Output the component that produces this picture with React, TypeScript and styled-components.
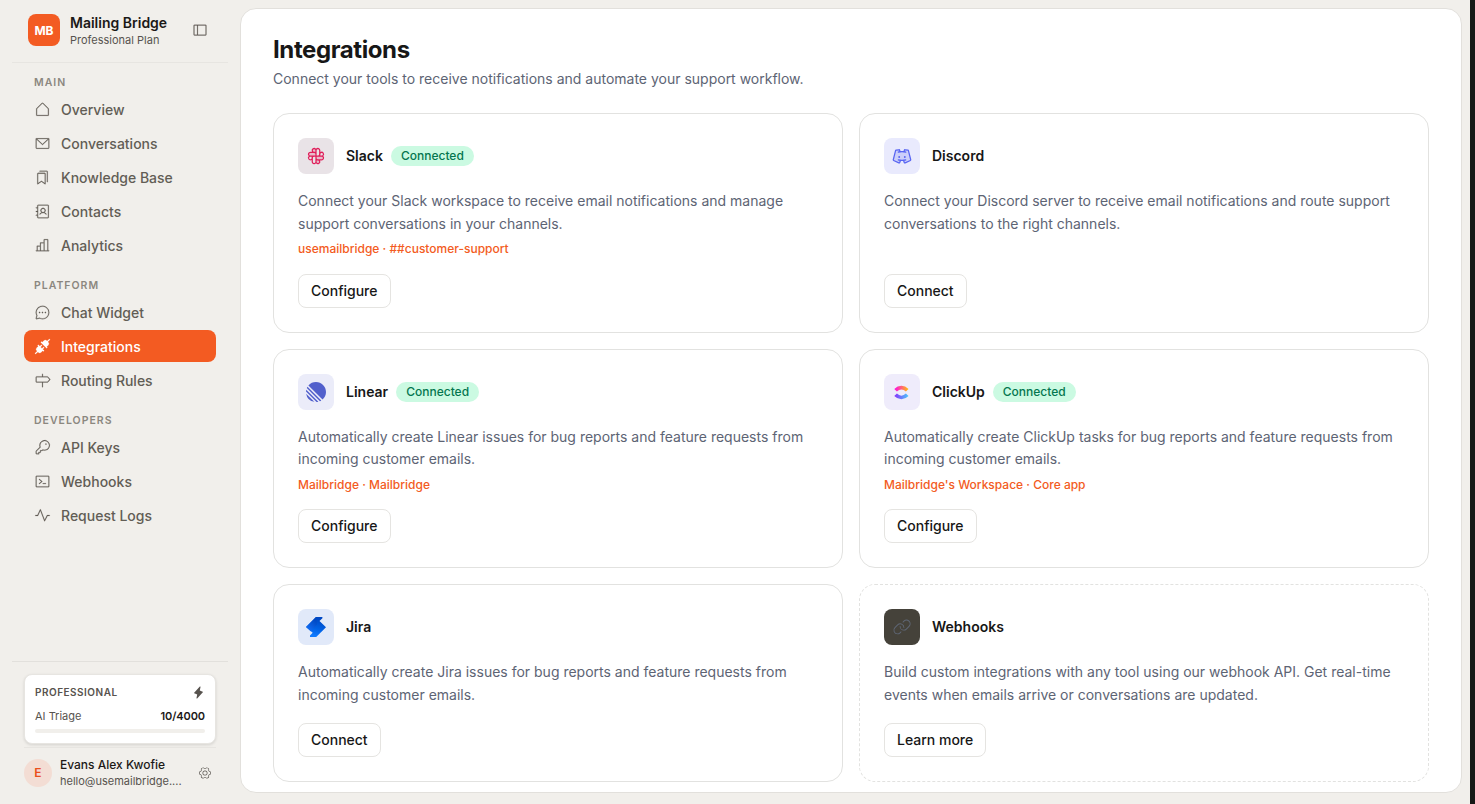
import React from "react";
import styled, { createGlobalStyle } from "styled-components";
import {
  PiHouseSimpleLight,
  PiEnvelopeSimpleLight,
  PiBookmarksSimpleLight,
  PiAddressBookLight,
  PiChartBarLight,
  PiChatCircleDotsLight,
  PiPlugsFill,
  PiSignpostLight,
  PiKeyLight,
  PiTerminalWindowLight,
  PiPulseLight,
  PiSidebarSimpleLight,
  PiLightningFill,
  PiGearSixLight,
  PiLinkLight,
  PiSlackLogoDuotone,
  PiDiscordLogoDuotone,
} from "react-icons/pi";
import { SiLinear } from "react-icons/si";

const GlobalStyle = createGlobalStyle`
  *, *::before, *::after { box-sizing: border-box; }
  body {
    margin: 0;
    background: #f1efeb;
    font-family: Inter, "Liberation Sans", sans-serif;
    color: #171717;
    overflow: hidden;
  }
  h1, h2, p { margin: 0; }
  svg { display: block; flex: none; }
`;

const Shell = styled.div`
  display: flex;
  width: 1475px;
  height: 804px;
  background: #f1efeb;
  border-right: 5px solid #161917;
`;

const Sidebar = styled.aside`
  width: 240px;
  height: 801px;
  padding: 0 12px;
  display: flex;
  flex-direction: column;
  flex: none;
`;

const Brand = styled.header`
  height: 62.5px;
  padding: 0 16px 1px;
  display: flex;
  align-items: center;
  gap: 10px;
  border-bottom: 1.5px solid #e7e5e1;
  color: #57534e;
`;

const Logo = styled.div`
  width: 32px;
  height: 32px;
  border-radius: 8px;
  background: #f35b22;
  color: #fff;
  display: grid;
  place-items: center;
  font-size: 12px;
  font-weight: 700;
`;

const BrandText = styled.div`
  flex: 1;
  padding-top: 2px;
  display: flex;
  flex-direction: column;
`;

const BrandName = styled.span`
  font-size: 14px;
  line-height: 18px;
  font-weight: 600;
  color: #1c1917;
`;

const BrandPlan = styled.span`
  font-size: 11px;
  line-height: 16px;
`;

const Toggle = styled.button`
  border: 0;
  padding: 0;
  margin-right: 4px;
  background: none;
  color: #57534e;
  svg {
    stroke: currentColor;
    stroke-width: 3px;
  }
`;

const Nav = styled.nav`
  flex: 1;
  padding: 10.5px 12px 0;
`;

const Group = styled.section`
  display: flex;
  flex-direction: column;
  gap: 2px;
  margin-bottom: 15px;
`;

const GroupLabel = styled.span`
  height: 18px;
  padding-left: 10px;
  line-height: 19px;
  font-size: 10.5px;
  font-weight: 600;
  letter-spacing: 1px;
  color: #8b877f;
`;

const NavItem = styled.a<{ $active?: boolean }>`
  height: 32px;
  padding: 0 10px;
  display: flex;
  align-items: center;
  gap: 10px;
  border-radius: 8px;
  font-size: 14px;
  font-weight: 500;
  color: ${(p) => (p.$active ? "#fff" : "#625d55")};
  background: ${(p) => (p.$active ? "#f35b22" : "transparent")};
  svg {
    stroke: currentColor;
    stroke-width: 3px;
  }
`;

const Footer = styled.footer`
  border-top: 1px solid #e2e0dc;
  padding: 12px 12px 0;
  height: 140px;
`;

const Usage = styled.div`
  height: 70px;
  padding: 10px 10px 0;
  border: 1px solid #e7e5e1;
  border-radius: 8px;
  background: #fff;
  box-shadow: 0 1px 3px rgba(0, 0, 0, 0.12);
`;

const UsageRow = styled.div`
  display: flex;
  align-items: center;
  justify-content: space-between;
  color: #57534e;
`;

const UsagePlan = styled.span`
  font-size: 10px;
  line-height: 15px;
  font-weight: 600;
  letter-spacing: 0.5px;
`;

const UsageLabel = styled.span`
  margin-top: 8px;
  font-size: 11px;
  line-height: 17px;
`;

const UsageCount = styled(UsageLabel)`
  font-weight: 600;
  letter-spacing: -0.1px;
  color: #1c1917;
`;

const Meter = styled.div`
  height: 4px;
  margin-top: 4px;
  border-radius: 2px;
  background: #f1efeb;
`;

const Account = styled.div`
  margin-top: 3px;
  border-top: 1.5px solid #e7e5e1;
  padding: 9px 4px 0 0;
  display: flex;
  align-items: center;
  gap: 8px;
  color: #57534e;
`;

const Avatar = styled.div`
  width: 28px;
  height: 28px;
  margin-top: -1px;
  border-radius: 50%;
  background: #f3ddd4;
  color: #ea4f1d;
  display: grid;
  place-items: center;
  font-size: 12px;
  font-weight: 600;
`;

const AccountText = styled.div`
  flex: 1;
  display: flex;
  flex-direction: column;
  font-size: 11px;
  line-height: 16px;
  strong {
    font-size: 12px;
    font-weight: 500;
    color: #1c1917;
  }
`;

const Main = styled.main`
  width: 1222px;
  height: 785px;
  margin-top: 8px;
  padding: 29px 32px 0;
  border: 1px solid #e2e0dc;
  border-radius: 16px;
  background: #fff;
`;

const Title = styled.h1`
  font-size: 24px;
  line-height: 24px;
  font-weight: 700;
  letter-spacing: -0.4px;
  color: #171717;
`;

const Subtitle = styled.p`
  margin-top: 6px;
  font-size: 14px;
  line-height: 21px;
  color: #5d6474;
`;

const Grid = styled.div`
  display: grid;
  grid-template-columns: 570px 570px;
  gap: 16px;
  margin-top: 24px;
`;

const Card = styled.article<{ $dashed?: boolean }>`
  padding: 24px;
  border: 1px ${(p) => (p.$dashed ? "dashed" : "solid")} #e2e2e0;
  border-radius: 16px;
  display: flex;
  flex-direction: column;
  align-items: flex-start;
`;

const CardHead = styled.div`
  display: flex;
  align-items: center;
`;

const IconTile = styled.div<{ $bg: string; $fg: string }>`
  width: 36px;
  height: 36px;
  margin-right: 12px;
  border-radius: 8px;
  display: grid;
  place-items: center;
  background: ${(p) => p.$bg};
  color: ${(p) => p.$fg};
`;

const CardTitle = styled.h2`
  font-size: 14px;
  line-height: 20px;
  font-weight: 600;
`;

const Badge = styled.span`
  height: 20px;
  margin-left: 8px;
  padding: 0 10px;
  border-radius: 10px;
  background: #cbfae2;
  color: #04764f;
  font-size: 12px;
  line-height: 20px;
  font-weight: 500;
`;

const Description = styled.p`
  margin-top: 16px;
  font-size: 14px;
  line-height: 22.75px;
  color: #5d6474;
  white-space: pre-line;
`;

const Meta = styled.p`
  margin-top: 4.5px;
  height: 17px;
  font-size: 12px;
  line-height: 18px;
  font-weight: 500;
  color: #f35b22;
`;

const Action = styled.button`
  height: 34px;
  margin-top: auto;
  padding: 0 12px 1px;
  border: 1px solid #e5e4e1;
  border-radius: 8px;
  background: #fff;
  font: 500 14px Inter, "Liberation Sans", sans-serif;
  color: #171717;
`;

const Spacer = styled.div<{ $tall?: boolean }>`
  height: ${(p) => (p.$tall ? "16.5px" : "16px")};
`;

const ClickUpLogo = () => (
  <svg width="20" height="20" viewBox="0 0 20 20" fill="none" strokeWidth="3.7">
    <defs>
      <linearGradient id="cuTop" x1="2" x2="17" y1="0" y2="0" gradientUnits="userSpaceOnUse">
        <stop stopColor="#ff02f0" />
        <stop offset="1" stopColor="#ffc800" />
      </linearGradient>
      <linearGradient id="cuBottom" x1="2" x2="17" y1="0" y2="0" gradientUnits="userSpaceOnUse">
        <stop stopColor="#8930fd" />
        <stop offset="1" stopColor="#49ccf9" />
      </linearGradient>
    </defs>
    <path d="M3.6 8.2Q6.2 5.6 9.4 5.6Q12.6 5.6 15.2 8.2" stroke="url(#cuTop)" />
    <path d="M3.6 12.8Q6.2 15.5 9.4 15.5Q12.6 15.5 15.2 12.8" stroke="url(#cuBottom)" />
  </svg>
);

const JiraLogo = () => (
  <svg width="20" height="20" viewBox="0 0 20 20">
    <defs>
      <linearGradient id="jiraBody" x1="12" y1="2" x2="8" y2="19" gradientUnits="userSpaceOnUse">
        <stop stopColor="#0049c4" />
        <stop offset="0.55" stopColor="#0061e4" />
        <stop offset="1" stopColor="#107bff" />
      </linearGradient>
      <linearGradient id="jiraLeft" x1="10" y1="4" x2="3" y2="12" gradientUnits="userSpaceOnUse">
        <stop stopColor="#0049c4" />
        <stop offset="1" stopColor="#0f69ef" />
      </linearGradient>
    </defs>
    <path d="M10 0H16.4V1.2L13.5 4L20 10.2L10.2 20H4V18.6L6.7 15.8L0 9.9Z" fill="url(#jiraBody)" />
    <path d="M10 0L0 9.9L5 14.6L11 7.5Z" fill="url(#jiraLeft)" />
  </svg>
);

const groups = [
  {
    label: "MAIN",
    items: [
      { icon: PiHouseSimpleLight, text: "Overview" },
      { icon: PiEnvelopeSimpleLight, text: "Conversations" },
      { icon: PiBookmarksSimpleLight, text: "Knowledge Base" },
      { icon: PiAddressBookLight, text: "Contacts" },
      { icon: PiChartBarLight, text: "Analytics" },
    ],
  },
  {
    label: "PLATFORM",
    items: [
      { icon: PiChatCircleDotsLight, text: "Chat Widget" },
      { icon: PiPlugsFill, text: "Integrations", active: true },
      { icon: PiSignpostLight, text: "Routing Rules" },
    ],
  },
  {
    label: "DEVELOPERS",
    items: [
      { icon: PiKeyLight, text: "API Keys" },
      { icon: PiTerminalWindowLight, text: "Webhooks" },
      { icon: PiPulseLight, text: "Request Logs" },
    ],
  },
];

interface Integration {
  name: string;
  icon: React.ReactNode;
  bg: string;
  fg: string;
  text: string;
  connected?: boolean;
  meta?: string;
  action: string;
  dashed?: boolean;
}

const integrations: Integration[] = [
  {
    name: "Slack",
    icon: <PiSlackLogoDuotone size={20} />,
    bg: "#e9e3e7",
    fg: "#e01e5a",
    connected: true,
    text: "Connect your Slack workspace to receive email notifications and manage\nsupport conversations in your channels.",
    meta: "usemailbridge · ##customer-support",
    action: "Configure",
  },
  {
    name: "Discord",
    icon: <PiDiscordLogoDuotone size={20} />,
    bg: "#e9eafd",
    fg: "#5865f2",
    text: "Connect your Discord server to receive email notifications and route support\nconversations to the right channels.",
    action: "Connect",
  },
  {
    name: "Linear",
    icon: <SiLinear size={20} />,
    bg: "#ebecf9",
    fg: "#5260cc",
    connected: true,
    text: "Automatically create Linear issues for bug reports and feature requests from\nincoming customer emails.",
    meta: "Mailbridge · Mailbridge",
    action: "Configure",
  },
  {
    name: "ClickUp",
    icon: <ClickUpLogo />,
    bg: "#efecfb",
    fg: "#7b68ee",
    connected: true,
    text: "Automatically create ClickUp tasks for bug reports and feature requests from\nincoming customer emails.",
    meta: "Mailbridge's Workspace · Core app",
    action: "Configure",
  },
  {
    name: "Jira",
    icon: <JiraLogo />,
    bg: "#e1e9f9",
    fg: "#0052cc",
    text: "Automatically create Jira issues for bug reports and feature requests from\nincoming customer emails.",
    action: "Connect",
  },
  {
    name: "Webhooks",
    icon: <PiLinkLight size={20} />,
    bg: "#45423a",
    fg: "#5f6776",
    text: "Build custom integrations with any tool using our webhook API. Get real-time\nevents when emails arrive or conversations are updated.",
    action: "Learn more",
    dashed: true,
  },
];

export default function App() {
  return (
    <Shell>
      <GlobalStyle />
      <Sidebar>
        <Brand>
          <Logo>MB</Logo>
          <BrandText>
            <BrandName>Mailing Bridge</BrandName>
            <BrandPlan>Professional Plan</BrandPlan>
          </BrandText>
          <Toggle>
            <PiSidebarSimpleLight size={16} />
          </Toggle>
        </Brand>
        <Nav>
          {groups.map((g) => (
            <Group key={g.label}>
              <GroupLabel>{g.label}</GroupLabel>
              {g.items.map(({ icon: Icon, text, active }: any) => (
                <NavItem key={text} $active={active}>
                  <Icon size={17} />
                  {text}
                </NavItem>
              ))}
            </Group>
          ))}
        </Nav>
        <Footer>
          <Usage>
            <UsageRow>
              <UsagePlan>PROFESSIONAL</UsagePlan>
              <PiLightningFill size={13} />
            </UsageRow>
            <UsageRow>
              <UsageLabel>AI Triage</UsageLabel>
              <UsageCount>10/4000</UsageCount>
            </UsageRow>
            <Meter />
          </Usage>
          <Account>
            <Avatar>E</Avatar>
            <AccountText>
              <strong>Evans Alex Kwofie</strong>
              <span>hello@usemailbridge....</span>
            </AccountText>
            <PiGearSixLight size={14} />
          </Account>
        </Footer>
      </Sidebar>
      <Main>
        <Title>Integrations</Title>
        <Subtitle>Connect your tools to receive notifications and automate your support workflow.</Subtitle>
        <Grid>
          {integrations.map((i) => (
            <Card key={i.name} $dashed={i.dashed}>
              <CardHead>
                <IconTile $bg={i.bg} $fg={i.fg}>
                  {i.icon}
                </IconTile>
                <CardTitle>{i.name}</CardTitle>
                {i.connected && <Badge>Connected</Badge>}
              </CardHead>
              <Description>{i.text}</Description>
              {i.meta && <Meta>{i.meta}</Meta>}
              <Spacer $tall={Boolean(i.meta)} />
              <Action>{i.action}</Action>
            </Card>
          ))}
        </Grid>
      </Main>
    </Shell>
  );
}
